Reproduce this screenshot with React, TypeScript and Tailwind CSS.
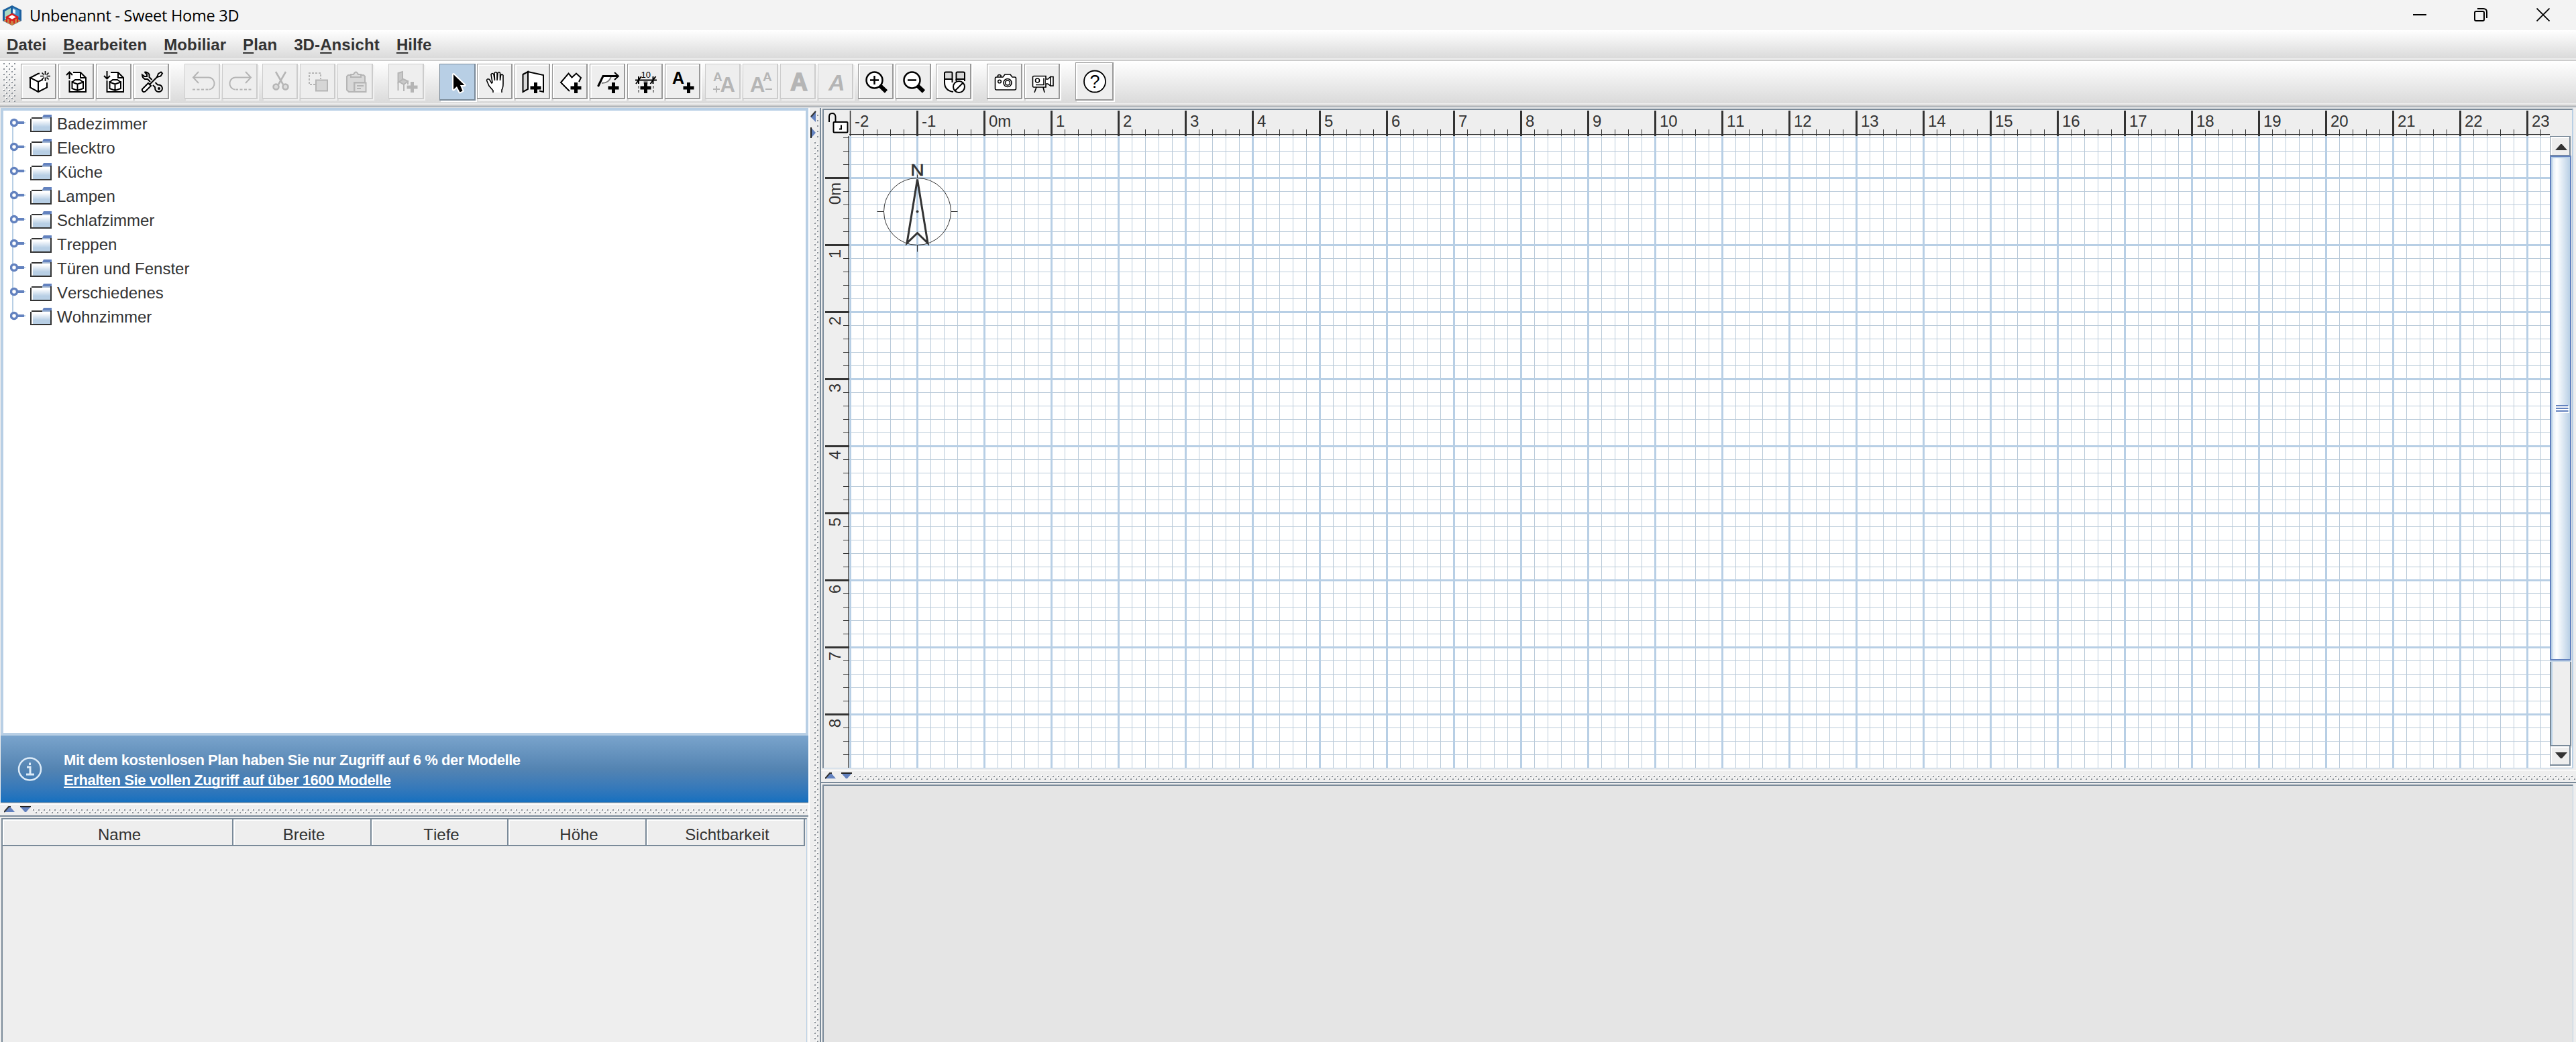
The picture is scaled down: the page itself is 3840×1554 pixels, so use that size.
import React from 'react';

type Tone = 'normal' | 'disabled' | 'selected' | 'large';

interface ToolButtonProps {
  label: string;
  tone?: Tone;
  children: React.ReactNode;
}

const toneClasses: Record<Tone, string> = {
  normal: 'w-[53px] h-[53px] mt-[4px] mr-[3px] bg-[#eeeeee] border-[#999999] text-black shadow-[inset_2px_2px_0_#ffffff,2px_2px_0_#ffffff]',
  disabled: 'w-[53px] h-[53px] mt-[4px] mr-[3px] bg-[#eeeeee] border-[#cccccc] text-[#b5b5b5] shadow-[2px_2px_0_#f1f1f1]',
  selected: 'w-[54px] h-[55px] mt-[4px] mr-[2px] bg-[#b8cfe5] border-[#7a8a99] text-black shadow-[2px_2px_0_#ffffff]',
  large: 'w-[57px] h-[57px] mt-[2px] mr-[3px] bg-[#eeeeee] border-[#999999] text-black shadow-[inset_2px_2px_0_#ffffff,2px_2px_0_#ffffff]',
};

const ToolButton: React.FC<ToolButtonProps> = ({ label, tone = 'normal', children }) => (
  <button
    aria-label={label}
    className={`shrink-0 border-t border-l border-r-2 border-b-2 flex items-center justify-center pl-[4px] pt-[2px] ${toneClasses[tone]}`}
  >
    <svg width="32" height="32" viewBox="0 0 32 32" fill="none" stroke="currentColor" strokeWidth="2" className="overflow-visible">
      {children}
    </svg>
  </button>
);

const Group: React.FC<{ className?: string; children: React.ReactNode }> = ({ className = '', children }) => (
  <div className={`flex items-start ${className}`}>{children}</div>
);

const Plus: React.FC<{ x: number; y: number }> = ({ x, y }) => (
  <path d={`M${x - 8} ${y}h16M${x} ${y - 8}v16`} strokeWidth="5" />
);

const Letter: React.FC<{ x: number; y: number; size: number; italic?: boolean }> = ({ x, y, size, italic }) => (
  <text
    x={x}
    y={y}
    fontSize={size}
    fontWeight="bold"
    fontStyle={italic ? 'italic' : 'normal'}
    fill="currentColor"
    stroke="none"
    className="font-['Liberation_Sans',sans-serif]"
  >
    A
  </text>
);

const DocumentIcon: React.FC<{ arrow: string }> = ({ arrow }) => (
  <>
    <path d="M10 2H21L29 10V31H4.500V14" fill="#fff" stroke="none" />
    <path d="M10 2H21L29 10V31H4.500V14M21 2V10H29" />
    <path d="M8.500 16.500V26L16.500 29L25 26V16.500L16.500 19.500ZM16.500 19.500V29M8.500 16.500L13 13H20L25 16.500" />
    <path d={arrow} />
  </>
);

const Toolbar = () => (
  <div className="h-[63px] flex items-start bg-gradient-to-b from-white to-[#dadada]">
    <div className="w-[20px] h-[60px] ml-[4px] mt-[2px] mr-[7px]">
      <Bumps id="grip" />
    </div>
    <Group>
      <ToolButton label="Neu">
        <path d="M2 10L14 4L22 8L27 17V24.500L14 31L2 24.500Z" fill="#fff" stroke="none" />
        <path d="M16 3.500L13.500 4L2 10L14 16L21 12.500M14 16V31M2 10V24.500L14 31L27 24.500V17" />
        <path d="M24.500 0v5.500M24.500 9.500v5.500M17 7.500h5.500M26.500 7.500h5.500M19.500 2.500l3 3M29.500 2.500l-3 3M19.500 12.500l3-3M29.500 12.500l-3-3" strokeWidth="1.700" />
      </ToolButton>
      <ToolButton label="Öffnen">
        <DocumentIcon arrow="M4.500 12V1.500M0 6L4.500 1.500L9 6" />
      </ToolButton>
      <ToolButton label="Speichern">
        <DocumentIcon arrow="M4.500 0V10.500M0 7L4.500 11.500L9 7" />
      </ToolButton>
      <ToolButton label="Einstellungen">
        <path d="M4.500 1.500L8 5V8H4.500L1 5.500Q1 10 5 12H9L13 16M4.500 1.500Q9 1 11.500 5V9L15.500 13M17 21L20 24Q20 31 26 31Q31 30 31 25.500Q30 20 24 20.500L20.500 17" />
        <path d="M1.500 26.500L10 18L14 22L5.500 30.500Q3 32 1.500 30T1.500 26.500ZM12 20L24 8" fill="#fff" />
        <path d="M23 9L25 4L29 1.500L31 3.500L28.500 7.500Z" fill="#fff" />
        <circle cx="26" cy="26" r="1" />
      </ToolButton>
    </Group>
    <Group className="ml-[20px]">
      <ToolButton label="Rückgängig" tone="disabled">
        <path d="M9 1L1 9.500L9 18M1 9.500H23A8.500 9 0 0 1 25 27.500" />
        <path d="M0 27.500H24" strokeDasharray="4 2.500" />
      </ToolButton>
      <ToolButton label="Wiederholen" tone="disabled">
        <path d="M23 1L31 9.500L23 18M31 9.500H9A8.500 9 0 0 0 7 27.500" />
        <path d="M8 27.500H32" strokeDasharray="4 2.500" />
      </ToolButton>
    </Group>
    <Group className="ml-[4px]">
      <ToolButton label="Ausschneiden" tone="disabled">
        <path d="M8 1L19 20M23 1L12 20" strokeWidth="2.500" />
        <circle cx="8.500" cy="23.500" r="4" fill="#dcdcdc" strokeWidth="2.500" />
        <circle cx="22.500" cy="23.500" r="4" fill="#dcdcdc" strokeWidth="2.500" />
      </ToolButton>
      <ToolButton label="Kopieren" tone="disabled">
        <path d="M11 20H2V3H19V12" strokeDasharray="3 2" />
        <path d="M12 13.500H29V29.500H12Z" fill="#d6d6d6" />
      </ToolButton>
      <ToolButton label="Einfügen" tone="disabled">
        <path d="M4 6H27L29 8V17H13V31H5L2 28V8Z" fill="#d8d8d8" />
        <path d="M8 9V5H12Q15.500 -2 19 5H23V9Z" fill="#dedede" />
        <path d="M13.500 17.500H30.500V31H13.500ZM17 22H27M17 26H23" fill="#dedede" />
      </ToolButton>
    </Group>
    <Group className="ml-[20px]">
      <ToolButton label="Möbel hinzufügen" tone="disabled">
        <path d="M2.500 3L9 1V14L2.500 17Z" fill="#c8c8c8" />
        <path d="M4 16L10 12L17 15L11 20ZM2.500 17V29M11 20V30M17 15V20" fill="#c8c8c8" />
        <Plus x={23.500} y={24} />
      </ToolButton>
    </Group>
    <Group className="ml-[20px]">
      <ToolButton label="Auswählen" tone="selected">
        <path d="M8 4V26.500L13 22L17.500 30.500L21.500 28.500L18 20H24.500Z" fill="#000" stroke="#fff" strokeWidth="4" strokeLinejoin="round" paintOrder="stroke" />
      </ToolButton>
      <ToolButton label="Verschieben">
        <path
          d="M12 32V29L6 22L2.500 14Q3 10.500 6.500 12.500L10 18L11 17L9 5Q11 2 13 5L14.500 14L14 3Q16 0 18 3V14L19 3Q21 0 22.500 3V14L23.500 6Q25.500 4 27 6.500V19Q27 25 25 28V32"
          fill="#fff"
          strokeWidth="1.600"
        />
      </ToolButton>
      <ToolButton label="Wände erstellen">
        <path d="M0.500 5L8 1V27L0.500 31Z" fill="#d9d9d9" />
        <path d="M8 1L31 6V31L8 27Z" fill="#fff" stroke="none" />
        <path d="M8 27V1L31 6V31L25 29.500" />
        <Plus x={19.500} y={25} />
      </ToolButton>
      <ToolButton label="Räume erstellen">
        <path d="M14 30L1 17L12.500 3.500L17.500 9.500L24 3.500L31 10L28 16" fill="#fff" />
        <Plus x={23.500} y={25} />
      </ToolButton>
      <ToolButton label="Polylinien erstellen">
        <path d="M8 8H20Q17 18 6 18" fill="#fff" stroke="#777" />
        <path d="M0.500 23L8 7.500H30" strokeWidth="3" />
        <path d="M25 2L31 7.500L25 13" />
        <Plus x={23.500} y={25} />
      </ToolButton>
      <ToolButton label="Bemaßungen erstellen">
        <text x="8.500" y="10" fontSize="13" fill="#000" stroke="none" className="font-['Liberation_Sans',sans-serif]">10</text>
        <path d="M0 13.500H32" />
        <path d="M5 8V19M1 19L9 8M26.500 8V19M22.500 19L30.500 8" />
        <path d="M5 22V32M27 22V32" stroke="#888" strokeDasharray="4 2" />
        <path d="M15.500 15V19" stroke="#888" strokeWidth="6" />
        <Plus x={15.500} y={25} />
      </ToolButton>
      <ToolButton label="Text hinzufügen">
        <Letter x={-1} y={19} size={25} />
        <Plus x={23.500} y={25} />
      </ToolButton>
    </Group>
    <Group className="ml-[4px]">
      <ToolButton label="Text vergrößern" tone="disabled">
        <Letter x={0} y={15} size={19} />
        <Letter x={10.500} y={31} size={31} />
        <path d="M0 27H10M5 22V32" />
      </ToolButton>
      <ToolButton label="Text verkleinern" tone="disabled">
        <Letter x={-1} y={31} size={31} />
        <Letter x={18} y={15} size={19} />
        <path d="M22 27H32" />
      </ToolButton>
      <ToolButton label="Fett" tone="disabled">
        <text x="3" y="28.500" fontSize="36" fontWeight="bold" fill="currentColor" strokeWidth="1.500" className="font-['Liberation_Sans',sans-serif]">A</text>
      </ToolButton>
      <ToolButton label="Kursiv" tone="disabled">
        <Letter x={4} y={28.500} size={34} italic />
      </ToolButton>
    </Group>
    <Group className="ml-[4px]">
      <ToolButton label="Vergrößern">
        <circle cx="12.500" cy="13.500" r="12" fill="#fff" strokeWidth="2.500" />
        <path d="M6 13.500H19M12.500 7V20" strokeWidth="2.500" />
        <path d="M21 22L30 30.500" strokeWidth="6" />
      </ToolButton>
      <ToolButton label="Verkleinern">
        <circle cx="12.500" cy="13.500" r="12" fill="#fff" strokeWidth="2.500" />
        <path d="M6 13.500H19" strokeWidth="2.500" />
        <path d="M21 22L30 30.500" strokeWidth="6" />
      </ToolButton>
    </Group>
    <Group className="ml-[4px]">
      <ToolButton label="Magnetismus">
        <path d="M1 12V17Q1 29 14 31V22Q12.500 20 12.500 12ZM18.500 12H31V15H18.500Z" fill="#fff" stroke="none" />
        <path d="M1 12V3Q1 1.500 3 1.500H11Q12.500 1.500 12.500 3V12ZM18.500 12V3Q18.500 1.500 20 1.500H29Q31 1.500 31 3V12Z" fill="#d9d9d9" />
        <path d="M1 12V17Q1 29 14 31M12.500 12V17M18.500 12V15M31 12V15" />
        <circle cx="22.500" cy="23.500" r="8.500" fill="#fff" />
        <path d="M17 29L28 18" />
      </ToolButton>
    </Group>
    <Group className="ml-[20px]">
      <ToolButton label="Foto erstellen">
        <path d="M2.500 9H12L15 5H23L26 9H29.500Q31.500 9 31.500 11V26Q31.500 28 29.500 28H2.500Q0.500 28 0.500 26V11Q0.500 9 2.500 9Z" fill="#fff" strokeWidth="1.600" />
        <path d="M4.500 9V6.500Q6.500 4.500 9 6.500V9" strokeWidth="1.600" />
        <circle cx="19" cy="17.500" r="6" strokeWidth="1.600" />
        <circle cx="19" cy="17.500" r="3.500" strokeWidth="1.600" />
        <circle cx="7" cy="15.500" r="2.300" strokeWidth="1.600" />
      </ToolButton>
      <ToolButton label="Video erstellen">
        <path d="M2 7.500H20V24H2Q0.500 24 0.500 22V9Q0.500 7.500 2 7.500ZM17 10.500V20.500H5" fill="#fff" strokeWidth="1.600" />
        <circle cx="7.500" cy="14" r="3" strokeWidth="1.600" />
        <path d="M20 12H23L27 8.500V22L23 19H20M27 8.500H31V22H27M6 24L3 32M16 24L18 32" fill="#fff" strokeWidth="1.600" />
      </ToolButton>
    </Group>
    <Group className="ml-[20px]">
      <ToolButton label="Hilfe" tone="large">
        <circle cx="15" cy="15.500" r="16" fill="#fff" strokeWidth="1.800" />
        <text x="7.500" y="25" fontSize="27" fill="#000" stroke="none" className="font-['Liberation_Sans',sans-serif]">?</text>
      </ToolButton>
    </Group>
  </div>
);

// Staggered dot texture used by the toolbar grip and split panes
const Bumps: React.FC<{ id: string }> = ({ id }) => (
  <svg className="block w-full h-full">
    <defs>
      <pattern id={id} width="8" height="8" patternUnits="userSpaceOnUse">
        <rect x="0" y="0" width="2" height="2" fill="#fff" />
        <rect x="1" y="1" width="2" height="2" fill="#8a9097" />
        <rect x="4" y="4" width="2" height="2" fill="#fff" />
        <rect x="5" y="5" width="2" height="2" fill="#8a9097" />
      </pattern>
    </defs>
    <rect width="100%" height="100%" fill={`url(#${id})`} />
  </svg>
);

const HorizontalDivider: React.FC<{ id: string }> = ({ id }) => (
  <div className="h-[19px] shrink-0 flex border-t border-white border-b-2 border-b-[#7a8a99] bg-[#eeeeee]">
    <svg width="42" height="14" className="ml-[6px] mt-[2px] shrink-0">
      <path d="M0 9H16L9 1H7Z" fill="#6382bf" />
      <path d="M0 9L7 1H10" fill="none" stroke="#333" strokeWidth="2" />
      <path d="M24 1H40L33 9H31Z" fill="#6382bf" />
      <path d="M24 1H40" stroke="#222" strokeWidth="2" />
    </svg>
    <div className="flex-1 h-[8px] mt-[6px]">
      <Bumps id={id} />
    </div>
  </div>
);

const VerticalDivider = () => (
  <div className="w-[19px] shrink-0 flex flex-col border-l-2 border-l-white border-r-2 border-r-[#7a8a99] bg-[#eeeeee]">
    <svg width="15" height="46" className="shrink-0 mt-[4px]">
      <path d="M1 9L9 1V17Z" fill="#6382bf" />
      <path d="M2 9L9 1" stroke="#333" strokeWidth="2" />
      <path d="M2 25V41L9 33Z" fill="#6382bf" />
      <path d="M2 25V41" stroke="#222" strokeWidth="2" />
      <path d="M11 7h2M11 15h2M11 23h2M11 31h2M11 39h2" stroke="#8a9097" strokeWidth="2" />
    </svg>
    <div className="flex-1 w-[8px] ml-[6px]">
      <Bumps id="bumps-main" />
    </div>
  </div>
);

const menus = [
  { before: '', key: 'D', after: 'atei' },
  { before: '', key: 'B', after: 'earbeiten' },
  { before: '', key: 'M', after: 'obiliar' },
  { before: '', key: 'P', after: 'lan' },
  { before: '3D-', key: 'A', after: 'nsicht' },
  { before: '', key: 'H', after: 'ilfe' },
];

const categories = [
  'Badezimmer',
  'Elecktro',
  'Küche',
  'Lampen',
  'Schlafzimmer',
  'Treppen',
  'Türen und Fenster',
  'Verschiedenes',
  'Wohnzimmer',
];

const TitleBar = () => (
  <div className="h-[45px] flex items-center bg-[#f3f3f3]">
    <svg width="30" height="32" viewBox="0 0 30 32" className="ml-[3px] mr-[11px]">
      <path d="M15 1L29 8V24L15 31L1 24V8Z" fill="#1b5f9e" />
      <path d="M4 10L13 5V17L4 22Z" fill="#a9d9c4" />
      <path d="M16 4L26 9V20L16 16Z" fill="#3f8fcb" />
      <path d="M16 6L20 8V14L16 12Z" fill="#eaf5fb" />
      <path d="M2 24L15 17L28 24L15 31Z" fill="#c98345" />
      <path d="M7 18.500L15 14L23 18.500L15 23Z" fill="#fff" stroke="#d81e1e" strokeWidth="2.500" />
      <path d="M7 19V26M12 22V28M18 22V28M23 19V26" stroke="#d81e1e" strokeWidth="2" />
    </svg>
    <span className="flex-1 font-['Open_Sans',sans-serif] text-[23.5px] leading-[45px] tracking-[-0.25px] text-black pt-[2px]">
      Unbenannt - Sweet Home 3D
    </span>
    <svg width="20" height="22" className="mr-[71px]" fill="none" stroke="#000" strokeWidth="2">
      <path d="M0 10H20" />
    </svg>
    <svg width="20" height="20" className="mr-[73px] -mt-[2px]" fill="none" stroke="#000" strokeWidth="2">
      <rect x="1" y="5" width="14" height="14" rx="2" />
      <path d="M5 1H14Q19 1 19 6V15" />
    </svg>
    <svg width="20" height="20" className="mr-[39px] -mt-[2px]" fill="none" stroke="#000" strokeWidth="1.800">
      <path d="M0.500 0.500L19.500 19.500M19.500 0.500L0.500 19.500" />
    </svg>
  </div>
);

const MenuBar = () => (
  <div className="h-[42px] flex bg-gradient-to-b from-white to-[#dadada] pl-[10px] gap-[25px] text-[24px] font-bold leading-[43px] tracking-[0.1px] text-[#333]">
    {menus.map(menu => (
      <span key={menu.key}>
        {menu.before}
        <span className="underline decoration-2 underline-offset-[3px] [text-decoration-skip-ink:none]">{menu.key}</span>
        {menu.after}
      </span>
    ))}
  </div>
);

const FolderIcon = () => (
  <svg width="32" height="26" viewBox="0 0 32 26" className="shrink-0">
    <defs>
      <linearGradient id="folder" x1="0" y1="0" x2="0" y2="1">
        <stop offset="0" stopColor="#fff" />
        <stop offset="0.650" stopColor="#b8cfe5" />
        <stop offset="1" stopColor="#b8cfe5" />
      </linearGradient>
    </defs>
    <path d="M4 8H30V24H4Z" fill="url(#folder)" />
    <path d="M2 5H18M1 6V25M0 25H32M31 4V26" stroke="#333" strokeWidth="2" />
    <path d="M18 4L20 0H32V4Z" fill="#6382bf" />
    <path d="M18 4H30V6H18Z" fill="#a3b8d4" />
  </svg>
);

const Catalog = () => (
  <div className="h-[936px] shrink-0 border-4 border-[#b8cfe5] bg-white pt-px pl-[10px] ml-px">
    {categories.map((name, i) => (
      <div key={name} className="h-[36px] flex items-center text-[24px] text-[#333]">
        <svg width="23" height="36" className="mr-[7px] shrink-0">
          <path d={i === 0 ? 'M4 17V36' : i === categories.length - 1 ? 'M4 0V17' : 'M4 0V36'} stroke="#b8cfe5" strokeWidth="2" />
          <path d="M10 17H21" stroke="#6382bf" strokeWidth="4" />
          <path d="M21 17H23" stroke="#b8cfe5" strokeWidth="2" />
          <circle cx="6" cy="17" r="4.500" fill="#fff" stroke="#6382bf" strokeWidth="3.500" />
        </svg>
        <FolderIcon />
        <span className="pl-[8px] pt-[2px] leading-[34px]">{name}</span>
      </div>
    ))}
  </div>
);

const Banner = () => (
  <div className="h-[100px] shrink-0 ml-px flex items-center bg-gradient-to-b from-[#7aa4cc] via-[#5484b2] to-[#1570bf] border-b border-[#2b6496] text-white">
    <svg width="38" height="38" className="ml-[25px] mr-[31px]" fill="none" stroke="#dcebf8" strokeWidth="2.500">
      <circle cx="18.500" cy="19" r="16.500" />
      <path d="M14 16H19V27M13 27H25M18.500 9.500V13" strokeWidth="3" />
    </svg>
    <div className="text-[22px] font-bold leading-[30px] tracking-[-0.43px] pt-[4px]">
      <p>Mit dem kostenlosen Plan haben Sie nur Zugriff auf 6 % der Modelle</p>
      <p className="underline decoration-2 underline-offset-[2px] [text-decoration-skip-ink:none]">
        Erhalten Sie vollen Zugriff auf über 1600 Modelle
      </p>
    </div>
  </div>
);

const columns = [
  { title: 'Name', width: 'w-[344px]' },
  { title: 'Breite', width: 'w-[206px]' },
  { title: 'Tiefe', width: 'w-[204px]' },
  { title: 'Höhe', width: 'w-[206px]' },
  { title: 'Sichtbarkeit', width: 'w-[236px]' },
];

const FurnitureTable = () => (
  <div className="flex-1 mt-[2px] ml-[2px] mr-[2px] border-t-2 border-l-2 border-[#7a8a99] border-r border-r-[#b8cfe5]">
    <div className="h-[40px] flex text-[24px] leading-[45px] text-[#333] text-center">
      {columns.map(column => (
        <div
          key={column.title}
          className={`${column.width} shrink-0 pl-[6px] border-r-2 border-b-2 border-[#7a8a99] shadow-[inset_2px_2px_0_#ffffff] bg-[#eeeeee]`}
        >
          {column.title}
        </div>
      ))}
    </div>
  </div>
);

const META = '#333333';
const GRID = '#b9cad9';
const xMarks = Array.from({ length: 26 }, (_, i) => i - 2);
const yMarks = Array.from({ length: 9 }, (_, i) => i);
const xTicks = Array.from({ length: 127 }, (_, i) => i);
const yTicks = Array.from({ length: 48 }, (_, i) => i);

const mark = (n: number) => (n === 0 ? '0m' : `${n}`);

const LockCorner = () => (
  <svg width="38" height="39" className="shrink-0">
    <path d="M8 18V10Q8 5 12.500 5T17.500 10V17" fill="none" stroke="#000" strokeWidth="2" />
    <rect x="14.500" y="18" width="21" height="15.500" rx="1" fill="#fff" stroke="#000" strokeWidth="2" />
    <path d="M23 28.500H26V22.500" fill="none" stroke="#000" strokeWidth="2" />
  </svg>
);

const HorizontalRuler = () => (
  <svg width="2535" height="39" className="shrink-0">
    <path d="M0 36.500H2535" stroke={META} strokeWidth="1" />
    {xTicks.map(i => (
      <path key={i} d={`M${i * 20 + 1.5} 29V39`} stroke={META} strokeWidth="1" />
    ))}
    {xMarks.map(n => (
      <g key={n}>
        <path d={`M${(n + 2) * 100 + 1.5} 1V39`} stroke={META} strokeWidth={n === -2 ? 1.5 : 3} />
        <text x={(n + 2) * 100 + 8} y="25" fontSize="24" fill={META}>{mark(n)}</text>
      </g>
    ))}
  </svg>
);

const VerticalRuler = () => (
  <svg width="38" height="942" className="shrink-0">
    <path d="M36.500 0V942" stroke={META} strokeWidth="1" />
    {yTicks.map(i => (
      <path key={i} d={`M29 ${i * 20 + 2.5}H38`} stroke={META} strokeWidth="1" />
    ))}
    {yMarks.map(n => (
      <g key={n}>
        <path d={`M2 ${n * 100 + 62.5}H38`} stroke={META} strokeWidth="3" />
        <text transform={`translate(25 ${n * 100 + 69}) rotate(-90)`} textAnchor="end" fontSize="24" fill={META}>{mark(n)}</text>
      </g>
    ))}
  </svg>
);

const Plan = () => (
  <svg width="2535" height="942" className="shrink-0 bg-white">
    {xTicks.map(i => (
      <path key={i} d={`M${i * 20 + 1.5} 0V942`} stroke={GRID} strokeWidth={i % 5 === 0 ? 0 : 1} />
    ))}
    {yTicks.map(i => (
      <path key={i} d={`M0 ${i * 20 + 2.5}H2535`} stroke={GRID} strokeWidth={i % 5 === 3 ? 0 : 1} />
    ))}
    {xMarks.map(n => (
      <path key={n} d={`M${(n + 2) * 100 + 1.5} 0V942`} stroke="#b8cfe5" strokeWidth="3" />
    ))}
    {yMarks.map(n => (
      <path key={n} d={`M0 ${n * 100 + 62.5}H2535`} stroke="#b8cfe5" strokeWidth="3" />
    ))}
    <g transform="translate(101.500 112.500)" fill="none" stroke={META}>
      <circle r="50" />
      <path d="M-60 0H-50M50 0H60M0 50V60M0 -50V-55" />
      <path d="M0 -48L-15.500 47L0 32L15.500 47Z" strokeWidth="3" />
      <circle r="2" fill={META} stroke="none" />
      <text transform="scale(1.180 1)" textAnchor="middle" y="-54" fontSize="24" fill={META} strokeWidth="0.500">N</text>
    </g>
  </svg>
);

const ScrollBar = () => (
  <div className="w-[33px] shrink-0 flex flex-col">
    <div className="w-[31px] h-[29px] border border-r-2 border-[#7a8a99] shadow-[inset_2px_2px_0_#ffffff] flex items-center justify-center pl-[3px] pt-[3px]">
      <svg width="18" height="9"><path d="M0 9L8 0H10L18 9Z" fill={META} /></svg>
    </div>
    <div className="w-[32px] h-[881px] border-x-2 border-b-2 border-[#7a8a99] bg-[#eeeeee] shadow-[inset_2px_0_0_#b8cfe5] flex flex-col">
      <div className="w-[32px] -ml-[2px] h-[753px] shrink-0 border-2 border-[#6382bf] bg-gradient-to-r from-[#dce8f4] via-white via-30% to-[#b8cfe5] shadow-[inset_2px_2px_0_#b8cfe5,0_2px_0_#c8d8e8] flex flex-col items-center justify-center gap-[2px] pl-[3px]">
        <div className="w-[18px] h-[2px] bg-[#6382bf] shadow-[2px_2px_0_#ffffff]" />
        <div className="w-[18px] h-[2px] bg-[#6382bf] shadow-[2px_2px_0_#ffffff]" />
        <div className="w-[18px] h-[2px] bg-[#6382bf] shadow-[2px_2px_0_#ffffff]" />
      </div>
    </div>
    <div className="w-[31px] h-[29px] border border-r-2 border-b-2 border-t-0 border-[#7a8a99] shadow-[inset_2px_2px_0_#ffffff,2px_2px_0_#ffffff] flex items-center justify-center pl-[3px]">
      <svg width="18" height="9"><path d="M0 0H18L10 9H8Z" fill={META} /></svg>
    </div>
  </div>
);

const PlanPane = () => (
  <div className="h-[984px] shrink-0 mt-px ml-[2px] mr-[4px] border-t-2 border-l-2 border-[#7a8a99] border-r-2 border-r-[#b8cfe5] border-b border-b-[#b8cfe5] bg-[#eeeeee]">
    <div className="flex">
      <LockCorner />
      <HorizontalRuler />
    </div>
    <div className="flex">
      <VerticalRuler />
      <Plan />
      <ScrollBar />
    </div>
  </div>
);

export default function App() {
  return (
    <div className="w-[3840px] h-[1554px] overflow-hidden flex flex-col bg-[#eeeeee] font-['Liberation_Sans',Arial,sans-serif] [font-kerning:none]">
      <TitleBar />
      <MenuBar />
      <div className="h-[4px] shrink-0 border-b-2 border-[#cccccc] bg-[#eeeeee]" />
      <Toolbar />
      <div className="h-[5px] shrink-0 border-b-[3px] border-[#cccccc] bg-[#eeeeee]" />
      <div className="h-px shrink-0 bg-[#7a8a99]" />
      <div className="flex flex-1 min-h-0 pt-px">
        <div className="w-[1205px] shrink-0 flex flex-col">
          <Catalog />
          <Banner />
          <div className="h-[2px] shrink-0" />
          <HorizontalDivider id="bumps-left" />
          <FurnitureTable />
        </div>
        <VerticalDivider />
        <div className="flex-1 min-w-0 flex flex-col">
          <PlanPane />
          <div className="h-[3px] shrink-0" />
          <HorizontalDivider id="bumps-right" />
          <div className="flex-1 mt-[2px] ml-[2px] mr-[4px] border-t-2 border-l-2 border-[#7a8a99] border-r border-r-[#b8cfe5] bg-[#e5e5e5]" />
        </div>
      </div>
    </div>
  );
}
